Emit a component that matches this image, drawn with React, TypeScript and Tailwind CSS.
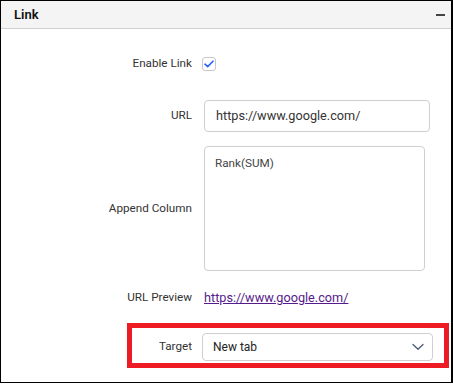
import React from "react";

export default function App() {
  return (
    <div className="w-[453px] h-[384px] bg-white" style={{ fontFamily: "Roboto, 'Liberation Sans', sans-serif" }}>
      <div className="w-[453px] h-[383px] border-t border-l border-b border-r-2 border-black flex flex-col">
        <div className="h-[28px] shrink-0 bg-[#f4f4f4] border-b border-[#d0d0d0] flex items-center justify-between pl-[13px] pr-[5px]">
          <span className="text-[13px] font-semibold text-[#111]">Link</span>
          <span className="w-[9px] h-[2px] bg-[#444] mr-[1px]" />
        </div>
        <div className="flex flex-col text-[11.7px] text-[#333]">
          <div className="flex items-center h-[14px] mt-[28px]">
            <div className="w-[191px] text-right">Enable Link</div>
            <div className="ml-[10px] w-[14px] h-[14px] border border-[#c8c8c8] rounded-[3px] flex items-center justify-center bg-white">
              <svg width="10" height="8" viewBox="0 0 10 8" fill="none">
                <path d="M1 4.2 L3.7 6.6 L9 1.2" stroke="#2962ff" strokeWidth="1.6" strokeLinecap="round" strokeLinejoin="round" />
              </svg>
            </div>
          </div>
          <div className="flex items-center h-[32px] mt-[29px]">
            <div className="w-[191px] text-right">URL</div>
            <div className="ml-[12px] w-[226px] h-[32px] border border-[#cfcfcf] rounded-[4px] flex items-center pl-[11px] text-[12.7px] text-[#333]">
              https://www.google.com/
            </div>
          </div>
          <div className="flex items-center h-[125px] mt-[14px]">
            <div className="w-[191px] text-right">Append Column</div>
            <div className="ml-[12px] w-[221px] h-[125px] border border-[#cfcfcf] rounded-[4px] pl-[10px] pt-[8px] text-[11.7px] text-[#444] leading-[16px]">
              Rank(SUM)
            </div>
          </div>
          <div className="flex items-center h-[20px] mt-[17px]">
            <div className="w-[191px] text-right">URL Preview</div>
            <a className="ml-[12px] text-[12.7px] text-[#551a8b] underline cursor-pointer">https://www.google.com/</a>
          </div>
          <div className="mt-[15px] ml-[126px] w-[322px] h-[45px] border-[5px] border-[#ed1c24] flex items-start pt-[5px]">
            <div className="w-[60px] h-[28px] flex items-center justify-end">Target</div>
            <div className="ml-[10px] w-[231px] h-[28px] border border-[#cfcfcf] rounded-[4px] flex items-center justify-between pl-[10px] pr-[8px]">
              <span className="text-[12px] text-[#222]">New tab</span>
              <svg width="12" height="8" viewBox="0 0 12 8" fill="none">
                <path d="M1 1.5 L6 6.2 L11 1.5" stroke="#4a5a70" strokeWidth="1.3" strokeLinecap="round" strokeLinejoin="round" />
              </svg>
            </div>
          </div>
        </div>
      </div>
    </div>
  );
}
